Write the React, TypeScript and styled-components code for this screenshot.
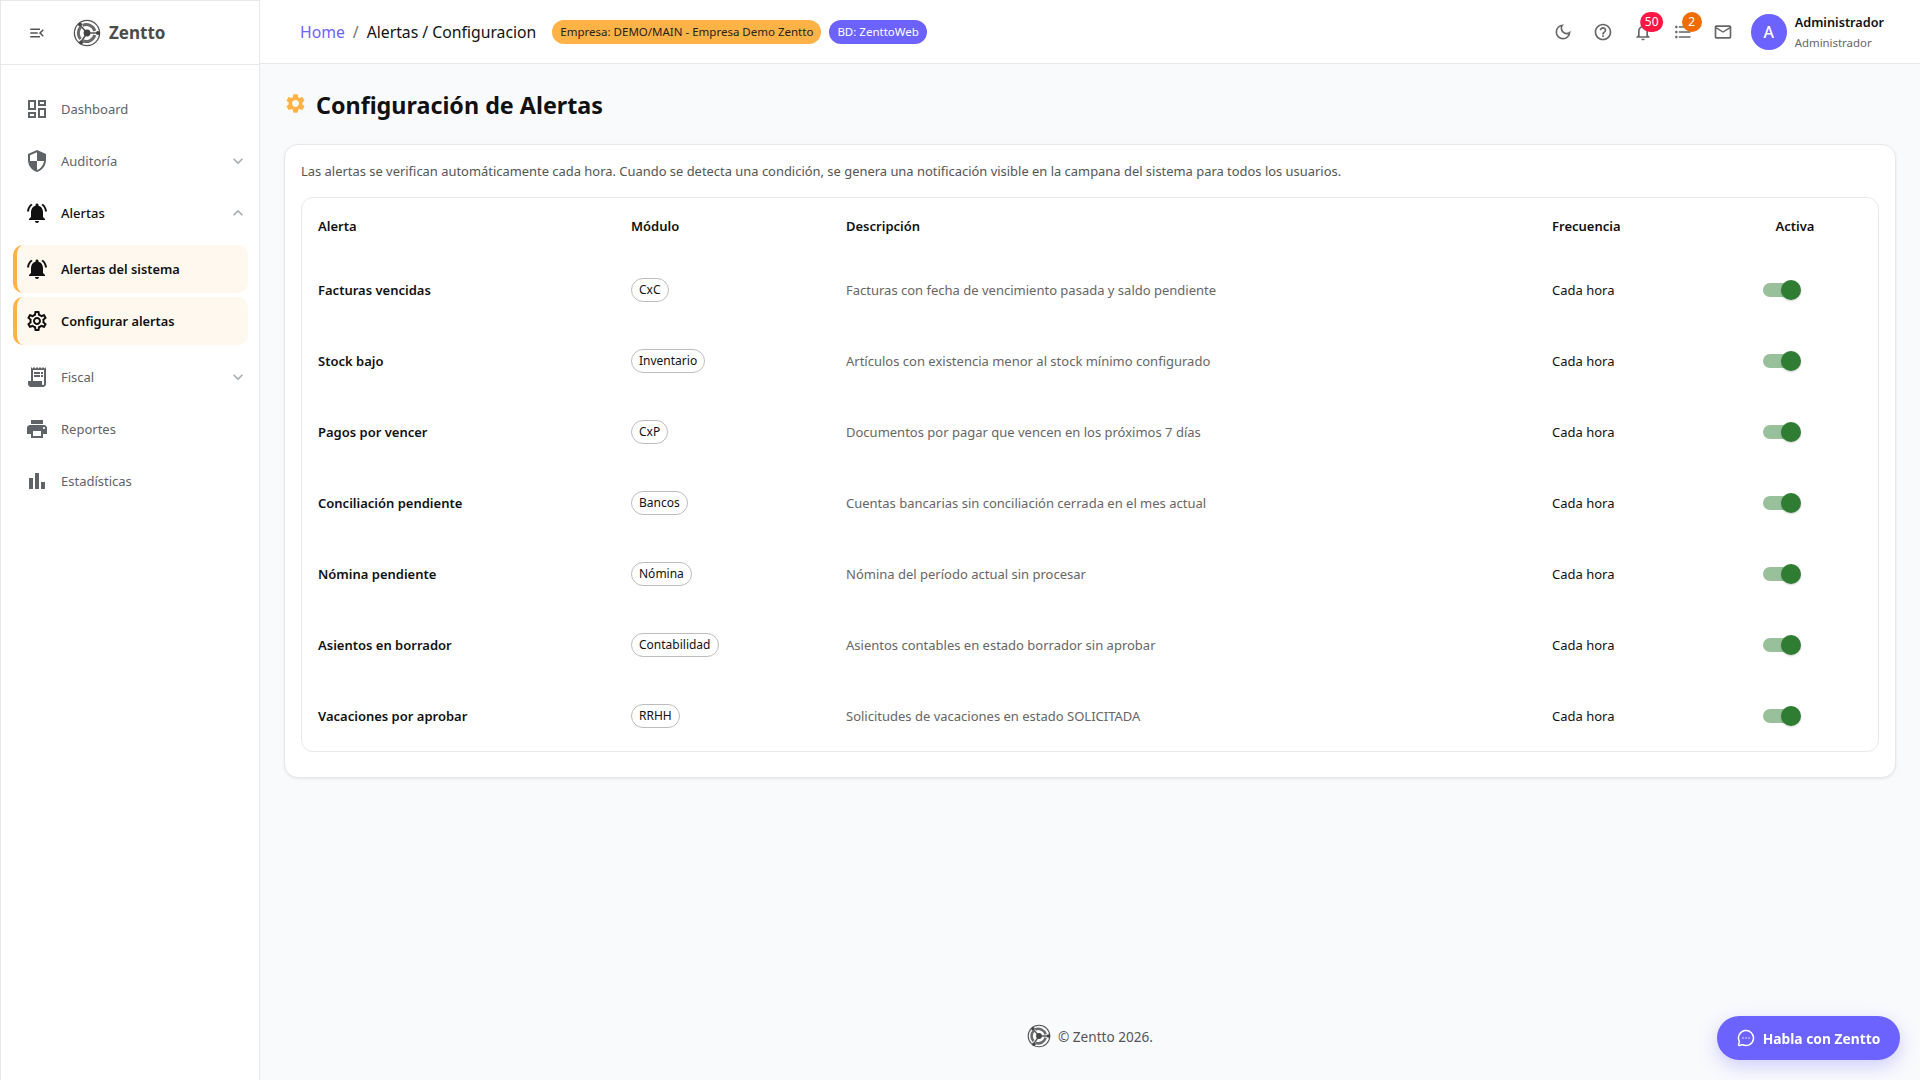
import React from 'react';
import styled, { createGlobalStyle } from 'styled-components';
import { MdMenuOpen, MdOutlineDashboard, MdSecurity, MdNotificationsActive, MdOutlineSettings, MdReceiptLong, MdPrint, MdBarChart, MdExpandMore, MdExpandLess, MdOutlineDarkMode, MdHelpOutline, MdNotificationsNone, MdFormatListBulleted, MdMailOutline, MdSettings } from 'react-icons/md';
import { MessageCircleMore } from 'lucide-react';

const Global = createGlobalStyle`
  html, body { margin: 0; padding: 0; background: #f9fafc; }
  body { font-family: "Noto Sans", "Open Sans", sans-serif; color: #111; }
  * { box-sizing: border-box; }
`;
const Shell = styled.div`display: grid; grid-template-columns: 260px 1fr; height: 1080px; overflow: hidden;`;
const Sidebar = styled.aside`background: #fff; border: 1px solid #e6e8eb; border-bottom: 0; height: 1080px;`;
const SideHead = styled.div`height: 64px; border-bottom: 1px solid #e6e8eb; display: flex; align-items: center; padding-left: 27px; color: #555;`;
const Brand = styled.div`display: flex; align-items: center; gap: 8px; margin-left: 27px; font-size: 17px; font-weight: 700; color: #4b4b4b; line-height: 28px; & > span { padding-top: 1px; }`;
const Nav = styled.nav`padding: 20px 11px 0 12px; display: flex; flex-direction: column;`;
const SubList = styled.div`display: flex; flex-direction: column; margin: 4px 0;`;
const Item = styled.div<{ $active?: boolean; $open?: boolean }>`
  height: 48px; margin-bottom: 4px; display: flex; align-items: center;
  padding-left: ${p => p.$active ? 8 : 12}px;
  border-left: ${p => p.$active ? '4px solid #ffb347' : '0'};
  border-radius: 10px; font-size: ${p => p.$active ? 12.8 : 13}px;
  color: ${p => (p.$active || p.$open) ? '#111' : '#5f6368'};
  font-weight: ${p => p.$active ? 600 : p.$open ? 500 : 400};
  background: ${p => p.$active ? '#fff8ee' : 'transparent'};
  & > svg:first-child { font-size: 24px; color: ${p => (p.$active || p.$open) ? '#111' : '#5f6368'}; margin-right: 12px; flex: none; }
`;
const Chevron = styled.span`margin-left: auto; display: flex; color: #a8acb0; font-size: 20px;`;
const Main = styled.div`display: flex; flex-direction: column; height: 1080px; min-width: 0;`;
const Topbar = styled.header`height: 64px; background: #fff; border-bottom: 1px solid #e6e8eb; display: flex; align-items: center; padding-left: 40px; flex: none;`;
const Crumbs = styled.div`display: flex; align-items: center; font-size: 15.75px; gap: 8px; color: #111;`;
const Home = styled.span`color: #6c63ff;`;
const Sep = styled.span`color: #777;`;
const Pill = styled.span<{ $bg: string; $fg: string; $gap: number }>`
  height: 24px; border-radius: 12px; padding: 0 8px; display: inline-flex; align-items: center; font-size: 11.5px;
  background: ${p => p.$bg}; color: ${p => p.$fg}; margin-left: ${p => p.$gap}px;
`;
const TopRight = styled.div`margin-left: auto; display: flex; align-items: center; padding-right: 36px;`;
const IconBtn = styled.div`width: 40px; height: 40px; display: flex; align-items: center; justify-content: center; color: #666; font-size: 20px; position: relative;`;
const Badge = styled.span<{ $bg: string }>`
  position: absolute; top: 0; left: 29px; transform: translateX(-50%); height: 20px; min-width: 20px; padding: 0 5px; border-radius: 10px;
  background: ${p => p.$bg}; color: #fff; font-size: 12px; display: flex; align-items: center; justify-content: center;
`;
const Avatar = styled.div`width: 36px; height: 36px; border-radius: 50%; background: #6c63ff; color: #fff; display: flex; align-items: center; justify-content: center; font-size: 16px; font-weight: 500; margin-left: 8px; margin-right: 8px;`;
const UserBox = styled.div`display: flex; flex-direction: column; gap: 4px; margin-top: -1px;`;
const UserName = styled.span`font-size: 12.7px; font-weight: 600; color: #111;`;
const UserRole = styled.span`font-size: 11.4px; color: #666;`;
const Content = styled.main`flex: 1; padding: 22px 24px 0 24px; display: flex; flex-direction: column;`;
const TitleRow = styled.div`display: flex; align-items: center; gap: 9px; height: 38px; margin-bottom: 20px;`;
const TitleIcon = styled.span`display: flex; font-size: 23px; color: #ffb347; margin-top: -3px;`;
const Title = styled.h1`margin: 0; font-size: 23.3px; font-weight: 700; color: #111;`;
const Card = styled.section`background: #fff; border: 1px solid #e6e8eb; border-radius: 14px; padding: 16px 16px 25px; box-shadow: 0 1px 3px rgba(0,0,0,.08);`;
const Note = styled.p`margin: 0 0 16px; font-size: 12.93px; color: #555; line-height: 20px;`;
const TableWrap = styled.div`border: 1px solid #e6e8eb; border-radius: 12px;`;
const Table = styled.table`width: 100%; border-collapse: collapse; table-layout: fixed;`;
const Th = styled.th<{ $center?: boolean; $w: number }>`
  width: ${p => p.$w}px; height: 56px; padding: 0 16px; font-size: 13px; font-weight: 600; color: #111;
  text-align: ${p => p.$center ? 'center' : 'left'};
`;
const Td = styled.td<{ $strong?: boolean; $muted?: boolean }>`
  height: 71px; padding: 0 16px; font-size: 13px; line-height: 20px;
  font-weight: ${p => p.$strong ? 600 : 400};
  color: ${p => p.$muted ? '#666' : '#111'};
`;
const Chip = styled.span`display: inline-flex; align-items: center; vertical-align: middle; height: 24px; border-radius: 12px; border: 1px solid #bdbdbd; padding: 0 7px; font-size: 12px; color: #111;`;
const SwitchCell = styled.div`display: flex; justify-content: flex-end; padding-right: 66px;`;
const Track = styled.span`position: relative; display: block; width: 34px; height: 14px; border-radius: 7px; background: #98c09b;`;
const Thumb = styled.span`position: absolute; right: -4px; top: -3px; width: 20px; height: 20px; border-radius: 50%; background: #2e7d32; box-shadow: 0 1px 2px rgba(0,0,0,.2);`;
const Footer = styled.footer`margin-top: auto; height: 72px; display: flex; align-items: center; justify-content: center; gap: 7px; font-size: 13.6px; color: #555; padding-bottom: 16px;`;
const Fab = styled.button`
  position: fixed; right: 20px; bottom: 20px; height: 44px; width: 183px; border: 0; border-radius: 22px; background: #6c63ff; color: #fff;
  display: flex; align-items: center; justify-content: center; gap: 8px; font: 700 13.8px "Noto Sans", sans-serif;
  box-shadow: 0 6px 18px rgba(108,99,255,.3);
`;

const Logo: React.FC<{ size: number }> = ({ size }) => (
  <svg width={size} height={size} viewBox="0 0 28 28" fill="none" stroke="#555">
    <circle cx="14" cy="14" r="12.6" strokeWidth="1.3" />
    <path d="M9.6 6.4 A9 9 0 0 1 21.8 12" strokeWidth="3" stroke="#6a6a6a" />
    <path d="M21.8 16 A9 9 0 0 1 10 22" strokeWidth="3" stroke="#6a6a6a" />
    <path d="M7.6 20 A9 9 0 0 1 7.6 8" strokeWidth="3" stroke="#6a6a6a" />
    <path d="M14 14 L7 6 M14 14 L25 14 M14 14 L8 23" strokeWidth="1.6" />
    <circle cx="14" cy="14" r="3.4" fill="#444" stroke="none" />
    <circle cx="7" cy="5.5" r="2" fill="#444" stroke="none" /><circle cx="25" cy="14" r="2" fill="#444" stroke="none" /><circle cx="8" cy="23.5" r="2" fill="#444" stroke="none" />
  </svg>
);

const rows = [
  ['Facturas vencidas', 'CxC', 'Facturas con fecha de vencimiento pasada y saldo pendiente'],
  ['Stock bajo', 'Inventario', 'Artículos con existencia menor al stock mínimo configurado'],
  ['Pagos por vencer', 'CxP', 'Documentos por pagar que vencen en los próximos 7 días'],
  ['Conciliación pendiente', 'Bancos', 'Cuentas bancarias sin conciliación cerrada en el mes actual'],
  ['Nómina pendiente', 'Nómina', 'Nómina del período actual sin procesar'],
  ['Asientos en borrador', 'Contabilidad', 'Asientos contables en estado borrador sin aprobar'],
  ['Vacaciones por aprobar', 'RRHH', 'Solicitudes de vacaciones en estado SOLICITADA'],
];

export default function App() {
  return (
    <>
      <Global />
      <Shell>
        <Sidebar>
          <SideHead>
            <MdMenuOpen size={18} />
            <Brand><Logo size={28} /><span>Zentto</span></Brand>
          </SideHead>
          <Nav>
            <Item><MdOutlineDashboard />Dashboard</Item>
            <Item><MdSecurity />Auditoría<Chevron><MdExpandMore /></Chevron></Item>
            <Item $open><MdNotificationsActive />Alertas<Chevron><MdExpandLess /></Chevron></Item>
            <SubList>
              <Item $active><MdNotificationsActive />Alertas del sistema</Item>
              <Item $active><MdOutlineSettings />Configurar alertas</Item>
            </SubList>
            <Item><MdReceiptLong />Fiscal<Chevron><MdExpandMore /></Chevron></Item>
            <Item><MdPrint />Reportes</Item>
            <Item><MdBarChart />Estadísticas</Item>
          </Nav>
        </Sidebar>
        <Main>
          <Topbar>
            <Crumbs><Home>Home</Home><Sep>/</Sep><span>Alertas / Configuracion</span></Crumbs>
            <Pill $bg="#ffb347" $fg="#222" $gap={16}>Empresa: DEMO/MAIN - Empresa Demo Zentto</Pill>
            <Pill $bg="#6c63ff" $fg="#fff" $gap={8}>BD: ZenttoWeb</Pill>
            <TopRight>
              <IconBtn><MdOutlineDarkMode /></IconBtn>
              <IconBtn><MdHelpOutline /></IconBtn>
              <IconBtn><MdNotificationsNone /><Badge $bg="#ff1744">50</Badge></IconBtn>
              <IconBtn><MdFormatListBulleted /><Badge $bg="#ef6c00">2</Badge></IconBtn>
              <IconBtn><MdMailOutline /></IconBtn>
              <Avatar>A</Avatar>
              <UserBox><UserName>Administrador</UserName><UserRole>Administrador</UserRole></UserBox>
            </TopRight>
          </Topbar>
          <Content>
            <TitleRow><TitleIcon><MdSettings /></TitleIcon><Title>Configuración de Alertas</Title></TitleRow>
            <Card>
              <Note>Las alertas se verifican automáticamente cada hora. Cuando se detecta una condición, se genera una notificación visible en la campana del sistema para todos los usuarios.</Note>
              <TableWrap>
                <Table>
                  <thead>
                    <tr>
                      <Th $w={313}>Alerta</Th><Th $w={215}>Módulo</Th><Th $w={706}>Descripción</Th><Th $w={175}>Frecuencia</Th><Th $w={168} $center>Activa</Th>
                    </tr>
                  </thead>
                  <tbody>
                    {rows.map(r => (
                      <tr key={r[0]}>
                        <Td $strong>{r[0]}</Td>
                        <Td><Chip>{r[1]}</Chip></Td>
                        <Td $muted>{r[2]}</Td>
                        <Td>Cada hora</Td>
                        <Td><SwitchCell><Track><Thumb /></Track></SwitchCell></Td>
                      </tr>
                    ))}
                  </tbody>
                </Table>
              </TableWrap>
            </Card>
            <Footer><Logo size={24} />© Zentto 2026.</Footer>
          </Content>
        </Main>
      </Shell>
      <Fab><MessageCircleMore size={18} />Habla con Zentto</Fab>
    </>
  );
}
